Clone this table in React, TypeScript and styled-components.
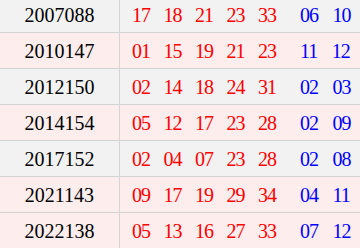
import React from 'react';
import styled, { createGlobalStyle } from 'styled-components';

const GlobalStyle = createGlobalStyle`
  html, body {
    margin: 0;
    padding: 0;
    background: #ffffff;
    overflow: hidden;
  }
`;

interface Draw {
  issue: string;
  red: string[];
  blue: string[];
  shade: 'grey' | 'pink';
}

const draws: Draw[] = [
  { issue: '2007088', red: ['17', '18', '21', '23', '33'], blue: ['06', '10'], shade: 'grey' },
  { issue: '2010147', red: ['01', '15', '19', '21', '23'], blue: ['11', '12'], shade: 'pink' },
  { issue: '2012150', red: ['02', '14', '18', '24', '31'], blue: ['02', '03'], shade: 'grey' },
  { issue: '2014154', red: ['05', '12', '17', '23', '28'], blue: ['02', '09'], shade: 'pink' },
  { issue: '2017152', red: ['02', '04', '07', '23', '28'], blue: ['02', '08'], shade: 'grey' },
  { issue: '2021143', red: ['09', '17', '19', '29', '34'], blue: ['04', '11'], shade: 'pink' },
  { issue: '2022138', red: ['05', '13', '16', '27', '33'], blue: ['07', '12'], shade: 'pink' },
];

export default function App() {
  return (
    <>
      <GlobalStyle />
      <Table>
        {draws.map((d) => (
          <Row key={d.issue} shade={d.shade}>
            <IssueCell>{d.issue}</IssueCell>
            <NumbersCell>
              <BallGroup>
                {d.red.map((n, i) => (
                  <Ball key={i} tone="red">
                    {n}
                  </Ball>
                ))}
              </BallGroup>
              <BallGroup $blue>
                {d.blue.map((n, i) => (
                  <Ball key={i} tone="blue">
                    {n}
                  </Ball>
                ))}
              </BallGroup>
            </NumbersCell>
          </Row>
        ))}
      </Table>
    </>
  );
}

const Table = styled.div`
  display: flex;
  flex-direction: column;
  width: 360px;
  margin-top: -3px;
  font-family: 'Liberation Serif', 'Times New Roman', serif;
`;

interface RowProps {
  shade: 'grey' | 'pink';
}

const Row = styled.div<RowProps>`
  display: grid;
  grid-template-columns: 120px 1fr;
  height: 36px;
  box-sizing: border-box;
  border-bottom: 1px solid #d4d4d4;
  background-color: ${({ shade }) => (shade === 'grey' ? '#f2f2f2' : '#fdeded')};
`;

const IssueCell = styled.div`
  display: flex;
  align-items: center;
  justify-content: center;
  box-sizing: border-box;
  border-right: 1px solid #d4d4d4;
  font-size: 20px;
  color: #000000;
  padding-top: 1px;
`;

const NumbersCell = styled.div`
  display: flex;
  align-items: center;
  padding-left: 12px;
  padding-top: 1px;
`;

const BallGroup = styled.div<{ $blue?: boolean }>`
  display: flex;
  gap: ${({ $blue }) => ($blue ? '14.5px' : '13.5px')};
  margin-left: ${({ $blue }) => ($blue ? '24px' : '0')};
`;

const Ball = styled.span<{ tone: 'red' | 'blue' }>`
  font-size: 20px;
  letter-spacing: -1px;
  color: ${({ tone }) => (tone === 'red' ? '#ff0000' : '#0000ff')};
`;
